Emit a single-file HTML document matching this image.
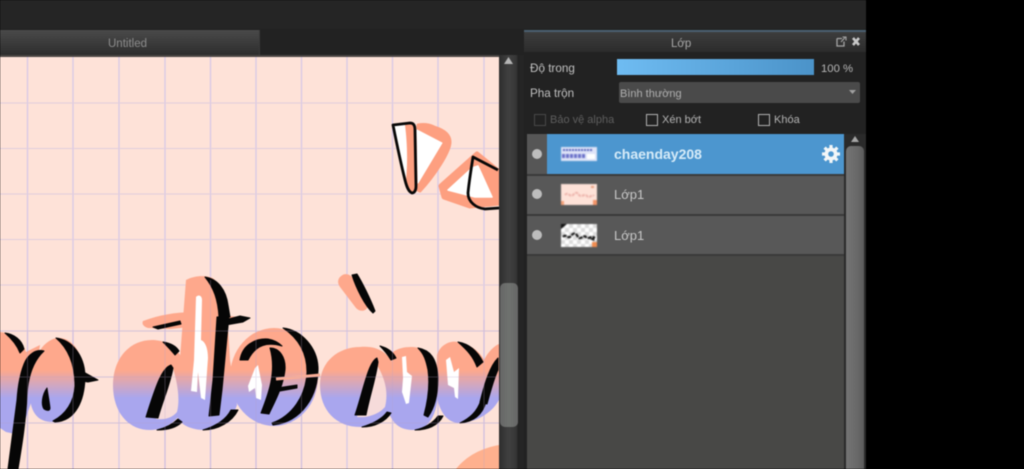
<!DOCTYPE html>
<html><head><meta charset="utf-8">
<style>
html,body{margin:0;padding:0;background:#000;}
#r{position:relative;width:1024px;height:469px;overflow:hidden;background:#000;font-family:"Liberation Sans",sans-serif;filter:blur(.6px);}
#r div{position:absolute;white-space:nowrap;}
.t{font-size:11.7px;color:#b4b4b4;line-height:14px;}
.s{font-size:11px;}
.c{width:10px;height:10px;border:1px solid #b0b0b0;}
</style></head><body>
<div id="r">
<div style="left:0;top:0;width:866px;height:469px;background:#222"></div>
<div style="left:0;top:0;width:866px;height:29px;background:#252525"></div>
<div style="left:0;top:30px;width:259px;height:25px;background:linear-gradient(#4a4a4a,#2d2d2d);border-right:1px solid #3a3a3a"></div>
<div class="t" style="left:108px;top:37px;color:#8d8d8d;font-size:11.5px">Untitled</div>
<div style="left:0;top:55px;width:499px;height:2px;background:#4a4644"></div>

<svg style="position:absolute;left:0;top:57px" width="499" height="412" viewBox="0 57 499 412">
<defs><linearGradient id="g" gradientUnits="userSpaceOnUse" x1="0" y1="370" x2="0" y2="398"><stop offset="0" stop-color="#fea88c"/><stop offset="1" stop-color="#a9a6ee"/></linearGradient></defs>
<rect x="0" y="57" width="499" height="412" fill="#fee2d8"/>
<g stroke="#d8c8e6" stroke-width="1.3" fill="none">
<path d="M27.5 57V469M73 57V469M119 57V469M165 57V469M210.500 57V469M256 57V469M301.500 57V469M347 57V469M392.500 57V469M438 57V469M484 57V469"/>
<path d="M0 103H499M0 148.500H499M0 194H499M0 239.500H499M0 285H499M0 331H499M0 377H499M0 423H499" stroke-width="1" stroke="#e0cede"/>
</g>

<!-- blob bottom right -->
<path d="M456 469C466 456 482 448 499 445V469Z" fill="#feb08e"/>

<!-- peach letters -->
<g fill="url(#g)">
<path d="M0 332C10 333 22 340 26 352L40 345L32 400L20 435L6 432L0 428Z"/>
<path d="M30 395C30 380 32 345 56 338C74 336 84 356 84 378C84 405 70 422 52 422C38 422 30 412 30 395Z"/>
<path d="M72 368L90 380L72 382Z"/>
<path d="M113 385C113 358 130 340 152 340C170 340 186 352 190 385C190 410 172 430 150 430C128 430 113 412 113 385Z"/>
<path d="M186 280C195 275 208 275 214 279C224 290 228 315 230 360L237 405C232 420 220 430 205 430C192 430 176 425 176 410Z"/>
<path d="M143 321C165 313 185 311 205 313L247 318L220 324L170 329L148 328C142 326 142 323 143 321Z"/>
<ellipse cx="274" cy="377" rx="44" ry="49"/>
<path d="M320 385C320 362 338 347 360 347C380 345 396 355 398 385C398 410 384 427 360 427C336 427 320 410 320 385Z"/>
<path d="M393 352C400 347 410 346 420 348C434 352 438 370 438 390C438 415 428 430 414 430C400 430 392 425 386 405Z"/>
<path d="M437 355C440 345 450 340 458 342C472 345 480 352 484 360C488 352 494 346 499 344V400C490 416 472 423 458 423C446 422 438 410 436 390Z"/>
<path d="M340 277C345 272 350 274 355 280L368 306C366 312 360 312 356 308L340 287C337 283 338 279 340 277Z"/>
</g>

<!-- light counters -->
<g fill="#fddfd8" opacity=".92">
<path d="M173 368C165 385 160 405 156 419C165 420 172 418 177 412C180 400 178 385 173 368Z"/>
<path d="M375 362C368 380 362 400 357 417C366 418 378 415 385 407C388 395 387 380 375 362Z"/>
</g>

<!-- black strokes -->
<g fill="#060606" stroke="#060606" stroke-width="1" stroke-linejoin="round">
<path d="M5 333C14 334 22 340 24 349L20 353C17 345 12 339 5 333Z"/>
<path d="M44 351C36 349 28 354 24 364C20 374 18 385 17 400L8 469H18C22 445 26 420 27 395C28 378 32 362 44 351Z"/>
<path d="M47 388C42 395 41 405 44 409C47 411 50 411 50 408C49 400 48 395 47 388Z"/>
<path d="M56 338C72 340 84 355 85 375C85 400 76 421 55 422L53 421C66 414 74 402 75 386C75 368 70 350 56 338Z"/>
<path d="M80 370L98 380L88 382L76 380Z"/>
<path d="M163 342C170 343 176 346 179 351L175 355C171 350 167 346 163 342Z"/>
<path d="M171 365C162 368 156 385 146 417L158 418C163 400 170 385 173 368Z"/>
<path d="M157 430C168 430 177 427 182 422L178 419C172 425 165 428 157 430Z"/>
<path d="M205 277C218 279 226 290 228 305L230 317L219 317C218 300 214 288 205 277Z"/>
<path d="M217 317L229 316L222 390L219 415L209 416L213 380Z"/>
<path d="M203 430C218 430 232 422 238 410L231 410C226 420 216 426 203 430Z"/>
<path d="M153 327L180 321L181 324L158 329Z"/>
<path d="M217 322L240 316L250 318L243 322L220 326Z"/>
<path d="M283 328C302 330 317 348 318 367C319 395 302 422 273 425L272 423C292 416 306 396 307 372C307 352 298 338 283 328Z"/>
<path d="M240 360C242 346 254 338 268 339C274 340 278 342 282 346C268 342 256 344 248 360Z"/>
<path d="M270 348C280 348 286 358 285 370C283 388 273 405 269 414L261 413C268 395 277 372 270 348Z"/>
<path d="M277 388L297 385L297 388L280 391Z"/>
<path d="M380 346C388 348 393 352 396 358L391 360C388 355 385 351 380 346Z"/>
<path d="M377 358C368 362 363 392 355 415L366 415C370 395 376 378 378 362Z"/>
<path d="M362 427C375 427 386 421 391 413L387 412C382 419 372 424 362 427Z"/>
<path d="M418 348C430 350 437 358 438 378C438 398 433 410 428 417L424 415C428 400 430 385 428 370C426 360 424 354 418 348Z"/>
<path d="M415 430C427 430 438 426 443 416L438 416C432 424 424 428 415 430Z"/>
<path d="M458 342C470 344 478 352 483 362L477 367C473 356 467 350 458 342Z"/>
<path d="M460 423C472 422 482 416 486 402L481 400C477 412 470 418 460 423Z"/>
<path d="M498 358C490 366 485 382 480 402L487 404C491 390 494 378 498 370Z"/>
<path d="M352 275L357 274C362 282 370 298 375 311L373 313C365 306 356 288 352 275Z"/>
</g>

<!-- peach cross through o -->
<path d="M276 379L320 375" stroke="#fbae96" stroke-width="3" fill="none"/>

<!-- white highlights -->
<g fill="#fff">
<path d="M196 297C199 294 202 296 202 300L201 340C206 342 208 350 208 358L205 400L201 398L198 372L197 392L191 391L194 360Z"/>
<path d="M255 368L258 365L262 385L261 400L256 398L255 388L249 392L248 386Z"/>
<path d="M402 357L406 356L407 372L412 376L409 403L406 404L404 398L402 392L403 378Z"/>
<path d="M446 360L450 357L454 372L459 368L458 399L455 397L454 388L448 385Z"/>
</g>

<!-- grid showing through -->
<g stroke="#b8a0c8" stroke-width="1" fill="none" opacity=".28">
<path d="M0 331H499M0 377H499M0 423H499M165 300V469M210.500 280V469M256 300V469M301.500 320V469M392.500 320V469M438 320V469M484 320V469M73 330V469M27.500 330V469"/>
</g>

<!-- triangles -->
<path d="M418 125C424 124 430 125 434 127C444 130 450 135 450 142C450 152 434 176 420 191L418 190Z" fill="#fd9f80" stroke="#fd9f80" stroke-width="3" stroke-linejoin="round"/>
<path d="M417 130L442 143L418 183Z" fill="#fff" stroke="#fff" stroke-width="1" stroke-linejoin="round"/>
<path d="M393 125L410 123C414 123 415 126 415 130L416 186C416 191 414 193 412 193C409 192 407 188 405 180C400 160 396 140 393 125Z" fill="#fff"/>
<path d="M405 125L410 123C414 123 415 126 415 130L416 186C416 191 414 193 412 193C409 192 407 188 406 180C408 160 407 140 405 125Z" fill="#fd9f80"/>
<path d="M393 125L410 123C414 123 415 126 415 130L416 186C416 191 414 193 412 193C409 192 407 188 405 180C400 160 396 140 393 125Z" fill="none" stroke="#070707" stroke-width="2.800" stroke-linejoin="round"/>
<path d="M477 154L441 186L444 197L470 206L499 203V172Z" fill="#fd9f80" stroke="#fd9f80" stroke-width="5" stroke-linejoin="round"/>
<path d="M472 168L448 190L475 197L492 197L478 166Z" fill="#fff" stroke="#fff" stroke-width="1.500" stroke-linejoin="round"/>
<path d="M498 170L473 157C471 170 469 182 468 193C468 202 476 208 485 209L499 208" fill="none" stroke="#070707" stroke-width="2.800" stroke-linejoin="round"/>
</svg>

<!-- canvas scrollbar -->
<div style="left:499px;top:55px;width:20px;height:414px;background:linear-gradient(90deg,#2e2e2e,#404040 50%,#363636 85%,#1e1e1e)"></div>
<div style="left:500px;top:283px;width:18px;height:144px;border-radius:5px;background:linear-gradient(90deg,#666,#6f726f 50%,#666)"></div>
<svg style="position:absolute;left:503px;top:56px" width="11" height="9"><path d="M5.500 1L10 8H1Z" fill="#b5b5b5"/></svg>
<div style="left:519px;top:55px;width:5px;height:414px;background:#252525"></div>

<!-- right panel -->
<div style="left:524px;top:30px;width:342px;height:2px;background:#4a6070"></div>
<div style="left:524px;top:32px;width:342px;height:20px;background:linear-gradient(#3d3d3d,#2c2c2c)"></div>
<div class="t" style="left:671px;top:37px;font-size:11.5px;color:#a8a8a8">Lớp</div>
<svg style="position:absolute;left:835px;top:35px" width="26" height="13" viewBox="0 0 26 13"><path d="M2 3.500H7M2 3.500V11H9V6.500" fill="none" stroke="#a5a5a5" stroke-width="1.300"/><path d="M6 7L10 2.500M7.500 2H11V5.500" fill="none" stroke="#a5a5a5" stroke-width="1.100"/><path d="M18 3L24 10M24 3L18 10" stroke="#c8c8c8" stroke-width="2.600"/></svg>

<div class="t" style="left:530px;top:62px;color:#c0c0c0">Độ trong</div>
<div style="left:617px;top:59px;width:197px;height:16px;background:linear-gradient(90deg,#6fbcf2,#4b93c9)"></div>
<div class="t" style="left:821px;top:62px;color:#b8b8b8;font-size:11.3px">100 %</div>
<div class="t" style="left:530px;top:87px;color:#c0c0c0">Pha trộn</div>
<div style="left:619px;top:82px;width:241px;height:21px;background:#4a4a4a;border-radius:2px"></div>
<div class="t s" style="left:620px;top:87px;color:#b0b0b0">Bình thường</div>
<svg style="position:absolute;left:848px;top:89px" width="9" height="6"><path d="M1 1H8L4.500 5Z" fill="#a0a0a0"/></svg>

<div class="c" style="left:534px;top:114px;border-color:#484848"></div>
<div class="t s" style="left:550px;top:113px;color:#5e5e5e">Bảo vệ alpha</div>
<div class="c" style="left:646px;top:114px"></div>
<div class="t s" style="left:662px;top:113px">Xén bớt</div>
<div class="c" style="left:758px;top:114px"></div>
<div class="t s" style="left:774px;top:113px">Khóa</div>

<!-- layer list -->
<div style="left:527px;top:134px;width:317px;height:335px;background:#484846"></div>
<div style="left:527px;top:134px;width:317px;height:40px;background:#565656"></div>
<div style="left:547px;top:134px;width:297px;height:40px;background:#4c96cf"></div>
<div style="left:527px;top:174px;width:317px;height:2px;background:#3a3a3a"></div>
<div style="left:527px;top:176px;width:317px;height:38px;background:#585858"></div>
<div style="left:527px;top:214px;width:317px;height:2px;background:#3a3a3a"></div>
<div style="left:527px;top:216px;width:317px;height:38px;background:#585858"></div>
<div style="left:527px;top:254px;width:317px;height:1.500px;background:#3a3a3a"></div>

<div style="left:532px;top:149px;width:10px;height:10px;border-radius:50%;background:#bdbdbd"></div>
<div style="left:532px;top:189px;width:10px;height:10px;border-radius:50%;background:#bdbdbd"></div>
<div style="left:532px;top:230px;width:10px;height:10px;border-radius:50%;background:#bdbdbd"></div>

<!-- thumbnails -->
<svg style="position:absolute;left:561px;top:147px;filter:blur(.5px)" width="36" height="14" viewBox="0 0 36 14">
<rect width="36" height="14" fill="#dfe4f8"/><path d="M2 3H32" stroke="#5560b8" stroke-width="2" stroke-dasharray="2 1"/><path d="M1 9H24" stroke="#6a70c8" stroke-width="4" stroke-dasharray="3 1"/><rect x="26" y="7" width="8" height="5" fill="#fff"/></svg>
<svg style="position:absolute;left:561px;top:184px;filter:blur(.5px)" width="36" height="21" viewBox="0 0 36 21">
<rect width="36" height="21" fill="#fee2d8"/><path d="M4 11C7 7 9 14 12 11S16 8 18 11S24 9 26 12S31 10 33 12" stroke="#edb4ac" stroke-width="2" fill="none" stroke-dasharray="3 1"/><rect x="0" y="17" width="3" height="4" fill="#f5a078"/><rect x="32" y="16" width="4" height="5" fill="#f39468"/><rect x="30" y="2" width="3" height="2" fill="#e8a080"/></svg>
<svg style="position:absolute;left:561px;top:224px;filter:blur(.4px)" width="36" height="23" viewBox="0 0 36 23">
<defs><pattern id="ck" width="8" height="8" patternUnits="userSpaceOnUse"><rect width="8" height="8" fill="#fff"/><rect width="4" height="4" fill="#dcdcdc"/><rect x="4" y="4" width="4" height="4" fill="#dcdcdc"/></pattern></defs>
<rect width="36" height="23" fill="url(#ck)"/><path d="M2 13C5 9 7 16 10 12S15 9 17 13S23 10 25 13S31 11 34 14" stroke="#151515" stroke-width="2.200" fill="none" stroke-dasharray="4 1"/><path d="M0 0H6L0 5Z" fill="#111"/><rect x="31" y="18" width="5" height="5" fill="#f08c50"/><path d="M29 15L34 13L33 17Z" fill="#111"/></svg>

<div style="left:614px;top:146px;font-size:14px;font-weight:bold;line-height:16px;color:#d6ebf8">chaenday208</div>
<div class="t" style="left:614px;top:187px;font-size:13px;line-height:16px;color:#c8c8c8">Lớp1</div>
<div class="t" style="left:614px;top:228px;font-size:13px;line-height:16px;color:#c8c8c8">Lớp1</div>

<svg style="position:absolute;left:821px;top:144px" width="20" height="20" viewBox="0 0 20 20"><g fill="#f2f6f8"><circle cx="10" cy="10" r="6.500"/><g stroke="#f2f6f8" stroke-width="3.200"><path d="M10 1V19M1 10H19M3.600 3.600L16.400 16.400M16.400 3.600L3.600 16.400"/></g></g><circle cx="10" cy="10" r="2.800" fill="#4c96cf"/></svg>

<!-- list scrollbar -->
<div style="left:844px;top:134px;width:22px;height:335px;background:#2a2a2a"></div>
<svg style="position:absolute;left:850px;top:135px" width="10" height="8"><path d="M5 1L9 7H1Z" fill="#a5a5a5"/></svg>
<div style="left:846px;top:146px;width:18px;height:323px;border-radius:5px 5px 0 0;background:linear-gradient(90deg,#747474,#696969 60%,#5c5c5c)"></div>
<div style="left:866px;top:0;width:158px;height:469px;background:#000"></div>
</div>
</body></html>
